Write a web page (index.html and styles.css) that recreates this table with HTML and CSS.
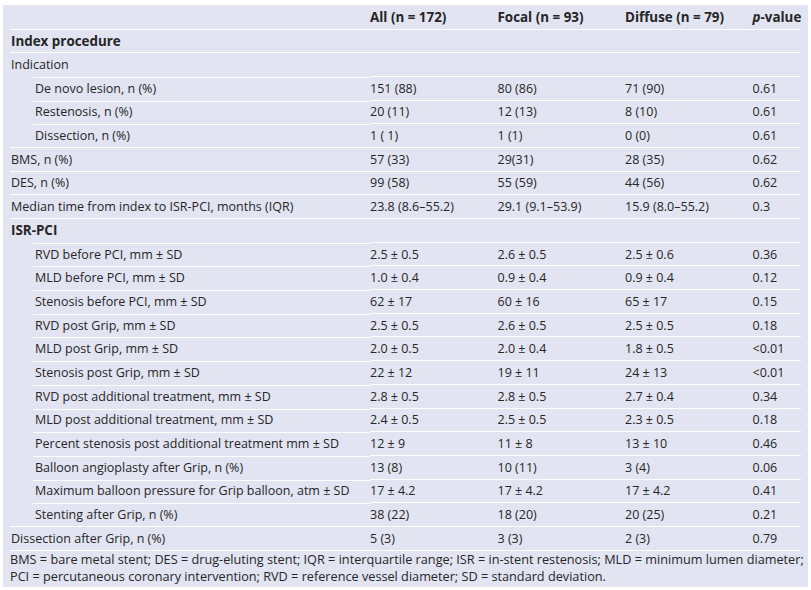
FILE: index.html
```html
<!DOCTYPE html>
<html>
<head>
<meta charset="utf-8">
<link rel="stylesheet" href="styles.css">
</head>
<body>
<div class="panel">
<table class="data">
<colgroup><col class="c-label"><col class="c-num"><col class="c-num"><col class="c-num"><col class="c-p"></colgroup>
<thead>
<tr><th></th><th>All (n = 172)</th><th>Focal (n = 93)</th><th>Diffuse (n = 79)</th><th><i>p</i>-value</th></tr>
</thead>
<tbody>
<tr class="section"><td>Index procedure</td><td></td><td></td><td></td><td></td></tr>
<tr><td>Indication</td><td></td><td></td><td></td><td></td></tr>
<tr><td class="ind">De novo lesion, n (%)</td><td>151 (88)</td><td>80 (86)</td><td>71 (90)</td><td>0.61</td></tr>
<tr><td class="ind">Restenosis, n (%)</td><td>20 (11)</td><td>12 (13)</td><td>8 (10)</td><td>0.61</td></tr>
<tr><td class="ind">Dissection, n (%)</td><td>1 ( 1)</td><td>1 (1)</td><td>0 (0)</td><td>0.61</td></tr>
<tr><td>BMS, n (%)</td><td>57 (33)</td><td>29(31)</td><td>28 (35)</td><td>0.62</td></tr>
<tr><td>DES, n (%)</td><td>99 (58)</td><td>55 (59)</td><td>44 (56)</td><td>0.62</td></tr>
<tr><td>Median time from index to ISR-PCI, months (IQR)</td><td>23.8 (8.6–55.2)</td><td>29.1 (9.1–53.9)</td><td>15.9 (8.0–55.2)</td><td>0.3</td></tr>
<tr class="section"><td>ISR-PCI</td><td></td><td></td><td></td><td></td></tr>
<tr><td class="ind">RVD before PCI, mm ± SD</td><td>2.5 ± 0.5</td><td>2.6 ± 0.5</td><td>2.5 ± 0.6</td><td>0.36</td></tr>
<tr><td class="ind">MLD before PCI, mm ± SD</td><td>1.0 ± 0.4</td><td>0.9 ± 0.4</td><td>0.9 ± 0.4</td><td>0.12</td></tr>
<tr><td class="ind">Stenosis before PCI, mm ± SD</td><td>62 ± 17</td><td>60 ± 16</td><td>65 ± 17</td><td>0.15</td></tr>
<tr><td class="ind">RVD post Grip, mm ± SD</td><td>2.5 ± 0.5</td><td>2.6 ± 0.5</td><td>2.5 ± 0.5</td><td>0.18</td></tr>
<tr><td class="ind">MLD post Grip, mm ± SD</td><td>2.0 ± 0.5</td><td>2.0 ± 0.4</td><td>1.8 ± 0.5</td><td>&lt;0.01</td></tr>
<tr><td class="ind">Stenosis post Grip, mm ± SD</td><td>22 ± 12</td><td>19 ± 11</td><td>24 ± 13</td><td>&lt;0.01</td></tr>
<tr><td class="ind">RVD post additional treatment, mm ± SD</td><td>2.8 ± 0.5</td><td>2.8 ± 0.5</td><td>2.7 ± 0.4</td><td>0.34</td></tr>
<tr><td class="ind">MLD post additional treatment, mm ± SD</td><td>2.4 ± 0.5</td><td>2.5 ± 0.5</td><td>2.3 ± 0.5</td><td>0.18</td></tr>
<tr><td class="ind">Percent stenosis post additional treatment mm ± SD</td><td>12 ± 9</td><td>11 ± 8</td><td>13 ± 10</td><td>0.46</td></tr>
<tr><td class="ind">Balloon angioplasty after Grip, n (%)</td><td>13 (8)</td><td>10 (11)</td><td>3 (4)</td><td>0.06</td></tr>
<tr><td class="ind">Maximum balloon pressure for Grip balloon, atm ± SD</td><td>17 ± 4.2</td><td>17 ± 4.2</td><td>17 ± 4.2</td><td>0.41</td></tr>
<tr><td class="ind">Stenting after Grip, n (%)</td><td>38 (22)</td><td>18 (20)</td><td>20 (25)</td><td>0.21</td></tr>
<tr class="last"><td>Dissection after Grip, n (%)</td><td>5 (3)</td><td>3 (3)</td><td>2 (3)</td><td>0.79</td></tr>
</tbody>
</table>
<p class="note">BMS = bare metal stent; DES = drug-eluting stent; IQR = interquartile range; ISR = in-stent restenosis; MLD = minimum lumen diameter;<br>PCI = percutaneous coronary intervention; RVD = reference vessel diameter; SD = standard deviation.</p>
</div>
</body>
</html>
```
FILE: styles.css
```css
html, body {
  margin: 0;
  padding: 0;
  background: #ffffff;
}
body {
  padding: 5px 3px 3px 3px;
  font-family: "Open Sans", "Liberation Sans", sans-serif;
  font-size: 12.5px;
  color: #262626;
}
.panel {
  background: #e2e4f2;
  padding: 0 7px 4px 7px;
  height: 582px;
  box-sizing: border-box;
}
.data {
  border-collapse: separate;
  border-spacing: 0;
  width: 791px;
  table-layout: fixed;
}
.c-label { width: 360px; }
.c-num { width: 127.5px; }
.c-p { width: 48.5px; }
.data th,
.data td {
  padding: 0;
  text-align: left;
  vertical-align: middle;
  white-space: nowrap;
}
.data th {
  height: 23.5px;
  font-weight: 700;
  font-size: 13.4px;
}
.data td {
  height: 22.7px;
  border-top: 1px solid #ffffff;
}
.data td:first-child {
  padding-left: 1px;
}
.data td.ind {
  padding-left: 25px;
  border-top-color: transparent;
  background: linear-gradient(#ffffff, #ffffff) no-repeat 23px 0 / 100% 1px;
}
.data .last td {
  border-bottom: 1px solid #ffffff;
}
.section td:first-child {
  font-weight: 700;
  font-size: 13.4px;
}
.note {
  margin: 0;
  padding: 0;
  font-size: 12.7px;
  line-height: 17px;
  white-space: nowrap;
}
```
